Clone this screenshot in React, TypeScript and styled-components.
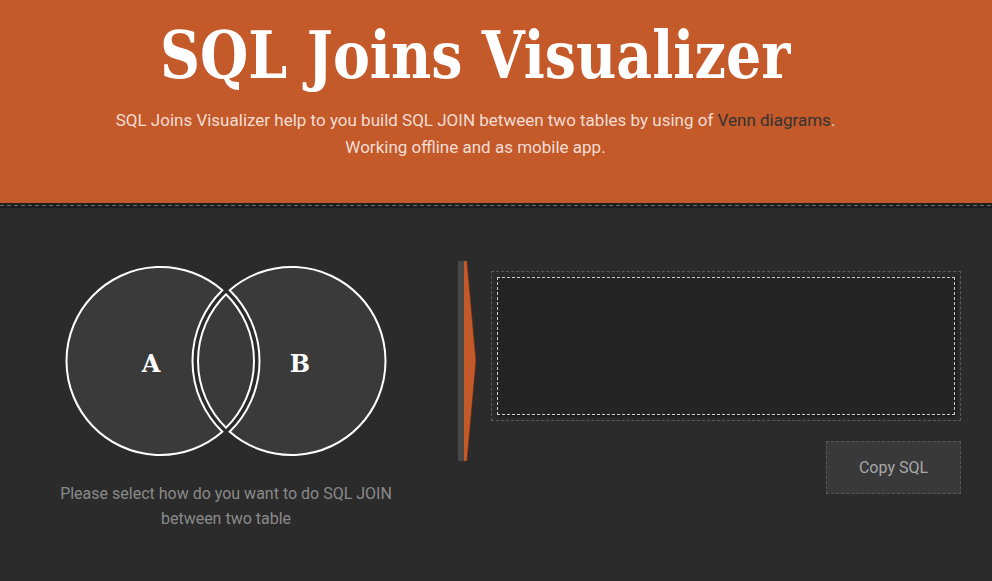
import React from "react";
import styled, { createGlobalStyle } from "styled-components";

const GlobalStyle = createGlobalStyle`
  html, body { margin: 0; padding: 0; }
  body {
    background: #2b2b2b;
    font-family: Roboto, "Liberation Sans", sans-serif;
  }
`;

const Page = styled.div`
  width: 992px;
  min-height: 581px;
  background: #2b2b2b;
  overflow: hidden;
`;

const Header = styled.header`
  background: #c4592a;
  height: 203px;
  box-sizing: border-box;
  padding: 22px 41px 0 0;
  text-align: center;
`;

const Title = styled.h1`
  display: inline-block;
  margin: 0;
  font-family: "DejaVu Serif", "Liberation Serif", serif;
  font-weight: bold;
  font-size: 66px;
  line-height: 1;
  color: #ffffff;
  white-space: nowrap;
  transform: scaleX(0.84);
  transform-origin: center;
`;

const Lead = styled.p`
  margin: 19px 0 0;
  font-size: 17px;
  line-height: 27px;
  color: #f3ded4;
`;

const LeadLink = styled.a`
  color: #333333;
  text-decoration: none;
`;

const Separator = styled.div`
  height: 5px;
  background-color: #1e1e1e;
  background-image: repeating-linear-gradient(
    to right,
    #6e6e6e 0,
    #6e6e6e 4px,
    transparent 4px,
    transparent 7px
  );
  background-size: 100% 1px;
  background-position: 0 2px;
  background-repeat: no-repeat;
`;

const Main = styled.main`
  display: flex;
  align-items: flex-start;
`;

const LeftColumn = styled.section`
  width: 452px;
  margin-right: 6px;
  display: flex;
  flex-direction: column;
  align-items: center;
`;

const VennSvg = styled.svg`
  display: block;
  margin-top: 56px;
`;

const Caption = styled.p`
  margin: 21px 0 0;
  width: 380px;
  text-align: center;
  font-size: 16px;
  line-height: 25px;
  color: #8a8a8a;
`;

const ArrowSvg = styled.svg`
  display: block;
  margin-top: 53px;
  flex: none;
`;

const RightColumn = styled.section`
  margin-left: 15px;
  width: 470px;
  display: flex;
  flex-direction: column;
  align-items: flex-end;
`;

const OutputFrame = styled.div`
  margin-top: 63px;
  width: 470px;
  height: 150px;
  box-sizing: border-box;
  border: 1px dashed #5a5a5a;
  padding: 5px;
`;

const OutputBox = styled.div`
  width: 100%;
  height: 100%;
  box-sizing: border-box;
  background: #242424;
  border: 1px dashed #d0d0d0;
  box-shadow: 1px 1px 3px rgba(0, 0, 0, 0.6);
`;

const CopyButton = styled.button`
  margin-top: 20px;
  width: 135px;
  height: 53px;
  box-sizing: border-box;
  background: #393939;
  border: 1px dashed #555555;
  color: #a8a8a8;
  font-family: Roboto, "Liberation Sans", sans-serif;
  font-size: 16px;
  cursor: pointer;
  padding: 0;
`;

const R = 94;
const C1 = 96.5;
const C2 = 227.5;
const CY = 97;
const LENS_R = 93.5;
const INNER_R = 99;

function meet(r1: number, r2: number, d: number) {
  const a = (d * d + r1 * r1 - r2 * r2) / (2 * d);
  const h = Math.sqrt(r1 * r1 - a * a);
  return { a, h };
}

function Venn() {
  const d = C2 - C1;
  const m = meet(R, INNER_R, d);
  const ax = C1 + m.a;
  const crescentA = `M ${ax} ${CY - m.h} A ${R} ${R} 0 1 0 ${ax} ${CY + m.h} A ${INNER_R} ${INNER_R} 0 0 1 ${ax} ${CY - m.h} Z`;
  const bx = C2 - m.a;
  const crescentB = `M ${bx} ${CY - m.h} A ${R} ${R} 0 1 1 ${bx} ${CY + m.h} A ${INNER_R} ${INNER_R} 0 0 0 ${bx} ${CY - m.h} Z`;
  const l = meet(LENS_R, LENS_R, d);
  const lx = C1 + l.a;
  const lens = `M ${lx} ${CY - l.h} A ${LENS_R} ${LENS_R} 0 0 0 ${lx} ${CY + l.h} A ${LENS_R} ${LENS_R} 0 0 0 ${lx} ${CY - l.h} Z`;
  const common = { fill: "#3a3a3a", stroke: "#ffffff", strokeWidth: 2 };
  const label = {
    fill: "#ffffff",
    fontFamily: '"DejaVu Serif", "Liberation Serif", serif',
    fontWeight: 700,
    fontSize: 24,
    textAnchor: "middle" as const,
  };
  return (
    <VennSvg width={325} height={196} viewBox="0 0 325 196">
      <path d={crescentA} {...common} />
      <path d={crescentB} {...common} />
      <path d={lens} {...common} />
      <text x={87} y={108} {...label}>A</text>
      <text x={236} y={108} {...label}>B</text>
    </VennSvg>
  );
}

function Pointer() {
  return (
    <ArrowSvg width={18} height={200} viewBox="0 0 18 200">
      <rect x={0} y={0} width={6} height={200} fill="#474747" />
      <polygon points="6,0 9,0 18,100 9,200 6,200" fill="#c4592a" />
      <polyline points="9,0 18,100 9,200" fill="none" stroke="#5a2a14" strokeWidth={0.6} />
    </ArrowSvg>
  );
}

export default function App() {
  return (
    <Page>
      <GlobalStyle />
      <Header>
        <Title>SQL Joins Visualizer</Title>
        <Lead>
          SQL Joins Visualizer help to you build SQL JOIN between two tables by using of{" "}
          <LeadLink href="#">Venn diagrams</LeadLink>.
          <br />
          Working offline and as mobile app.
        </Lead>
      </Header>
      <Separator />
      <Main>
        <LeftColumn>
          <Venn />
          <Caption>
            Please select how do you want to do SQL JOIN
            <br />
            between two table
          </Caption>
        </LeftColumn>
        <Pointer />
        <RightColumn>
          <OutputFrame>
            <OutputBox />
          </OutputFrame>
          <CopyButton>Copy SQL</CopyButton>
        </RightColumn>
      </Main>
    </Page>
  );
}
